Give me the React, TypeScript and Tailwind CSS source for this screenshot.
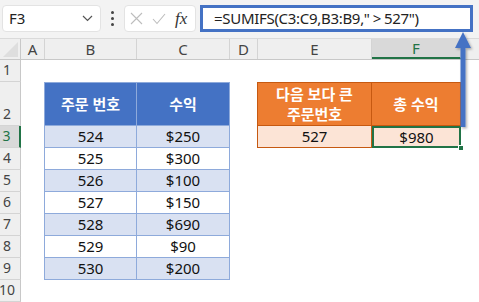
import React from "react";

const F = "font-['Noto_Sans','Noto_Sans_CJK_KR',sans-serif]";

const COLS = ["w-[21px]", "w-[24px]", "w-[92px]", "w-[93px]", "w-[28px]", "w-[114px]", "w-[89px]", "flex-1"];

function RowHeader({ n, active }: { n: number; active?: boolean }) {
  return (
    <div
      className={`w-[21px] shrink-0 flex items-end pb-[1px] justify-center pr-[6px] text-[14px] border-b border-[#d4d4d4] ${
        active ? "bg-[#d9d9d9] text-[#217346] border-r-2 border-r-[#217346]" : "bg-[#efefef] text-[#444] border-r border-r-[#c8c8c8]"
      }`}
    >
      {n}
    </div>
  );
}

function Empty({ w }: { w: string }) {
  return <div className={`${w} shrink-0`} />;
}

const blueRows: [string, string][] = [
  ["524", "$250"],
  ["525", "$300"],
  ["526", "$100"],
  ["527", "$150"],
  ["528", "$690"],
  ["529", "$90"],
  ["530", "$200"],
];

export default function App() {
  return (
    <div className={`relative w-[479px] h-[302px] overflow-hidden bg-white ${F}`}>
      {/* formula bar */}
      <div className="h-[39px] bg-[#f3f3f3] border-b border-[#dadada] flex items-start pt-[5px] pl-[2px]">
        <div className="w-[99px] h-[27px] bg-white rounded-[4px] border border-[#e3e3e3] flex items-center justify-between pl-[6px] pr-[7px]">
          <span className="text-[15px] text-[#222]">F3</span>
          <svg width="11" height="7" viewBox="0 0 11 7">
            <path d="M1 1 L5.5 5.5 L10 1" fill="none" stroke="#555" strokeWidth="1.2" />
          </svg>
        </div>
        <div className="w-[23px] h-[27px] flex flex-col items-center justify-center gap-[3px]">
          <span className="w-[3px] h-[3px] bg-[#444] rounded-full" />
          <span className="w-[3px] h-[3px] bg-[#444] rounded-full" />
          <span className="w-[3px] h-[3px] bg-[#444] rounded-full" />
        </div>
        <div className="w-[72px] h-[27px] bg-white rounded-[4px] border border-[#e3e3e3] flex items-center pl-[5px] gap-[9px]">
          <svg width="13" height="13" viewBox="0 0 13 13">
            <path d="M1 1 L12 12 M12 1 L1 12" stroke="#bdbdbd" strokeWidth="1.1" />
          </svg>
          <svg width="14" height="12" viewBox="0 0 14 12">
            <path d="M1 6 L5 10.5 L13 1" fill="none" stroke="#bdbdbd" strokeWidth="1.1" />
          </svg>
          <span className="font-['Liberation_Serif',serif] italic text-[17px] text-[#333] leading-none">fx</span>
        </div>
        <div className="ml-[4px] w-[273px] h-[27px] bg-white border-[3px] border-[#4472c4] flex items-center pl-[11px]">
          <span className="text-[15px] text-[#222] whitespace-nowrap tracking-[-0.3px]">
            =SUMIFS(C3:C9,B3:B9,"<span className="px-[3px]">&gt;</span>527")
          </span>
        </div>
      </div>

      {/* column headers */}
      <div className="flex h-[21px] bg-[#efefef] border-b border-[#c8c8c8] text-[15px] text-[#444]">
        <div className="w-[21px] shrink-0 border-r border-[#c8c8c8] relative overflow-hidden">
          <svg className="absolute right-[2px] bottom-[2px]" width="15" height="15" viewBox="0 0 15 15">
            <path d="M15 0 L15 15 L0 15 Z" fill="#dedede" />
          </svg>
        </div>
        {["A", "B", "C", "D", "E", "F"].map((c, i) => (
          <div
            key={c}
            className={`${COLS[i + 1]} shrink-0 flex items-center justify-center border-r border-[#d4d4d4] ${
              c === "F" ? "bg-[#d9d9d9] text-[#217346] border-b-2 border-b-[#217346]" : ""
            }`}
          >
            {c}
          </div>
        ))}
        <div className="flex-1" />
      </div>

      {/* row 1 */}
      <div className="flex h-[22px]">
        <RowHeader n={1} />
      </div>

      {/* row 2 */}
      <div className="flex h-[44px] text-[15px]">
        <RowHeader n={2} />
        <Empty w="w-[23px]" />
        <div className="w-[93px] shrink-0 bg-[#4472c4] border border-[#8eaadb] flex items-center justify-center text-white font-bold">
          주문 번호
        </div>
        <div className="w-[93px] shrink-0 bg-[#4472c4] border-y border-r border-[#8eaadb] flex items-center justify-center text-white font-bold">
          수익
        </div>
        <Empty w="w-[27px]" />
        <div className="w-[115px] shrink-0 bg-[#ed7d31] border border-[#c65911] flex items-center justify-center text-center text-white font-bold leading-[20px]">
          다음 보다 큰
          <br />
          주문번호
        </div>
        <div className="w-[89px] shrink-0 bg-[#ed7d31] border-y border-r border-[#c65911] flex items-center justify-center text-white font-bold">
          총 수익
        </div>
      </div>

      {/* rows 3-9 */}
      {blueRows.map(([a, b], i) => {
        const shade = i % 2 === 0 ? "bg-[#d9e1f2]" : "bg-white";
        return (
          <div key={a} className="flex h-[22px] text-[15px] text-[#111]">
            <RowHeader n={i + 3} active={i === 0} />
            <Empty w="w-[23px]" />
            <div className={`w-[93px] shrink-0 ${shade} border-x border-b border-[#8eaadb] flex items-center justify-center`}>
              {a}
            </div>
            <div className={`w-[93px] shrink-0 ${shade} border-r border-b border-[#8eaadb] flex items-center justify-center`}>
              {b}
            </div>
            {i === 0 && (
              <>
                <Empty w="w-[27px]" />
                <div className="w-[115px] shrink-0 bg-[#fce4d6] border-x border-b border-[#c65911] flex items-center justify-center">
                  527
                </div>
                <div className="relative w-[89px] shrink-0 bg-[#fce4d6] border-2 border-[#217346] flex items-center justify-center">
                  $980
                  <span className="absolute right-[-5px] bottom-[-5px] w-[6px] h-[6px] bg-[#217346] border border-white" />
                </div>
              </>
            )}
          </div>
        );
      })}

      {/* row 10 */}
      <div className="flex h-[22px]">
        <RowHeader n={10} />
      </div>

      {/* arrow overlay */}
      <svg className="absolute left-0 top-0 pointer-events-none" width="479" height="302" viewBox="0 0 479 302">
        <defs>
          <filter id="sh" x="-50%" y="-10%" width="200%" height="120%">
            <feDropShadow dx="1.5" dy="1.5" stdDeviation="1" floodColor="#000" floodOpacity="0.3" />
          </filter>
        </defs>
        <g filter="url(#sh)">
          <rect x="460.5" y="44" width="5" height="83" fill="#4472c4" />
          <path d="M455 48 L471 48 L463 32 Z" fill="#4472c4" />
        </g>
      </svg>
    </div>
  );
}
